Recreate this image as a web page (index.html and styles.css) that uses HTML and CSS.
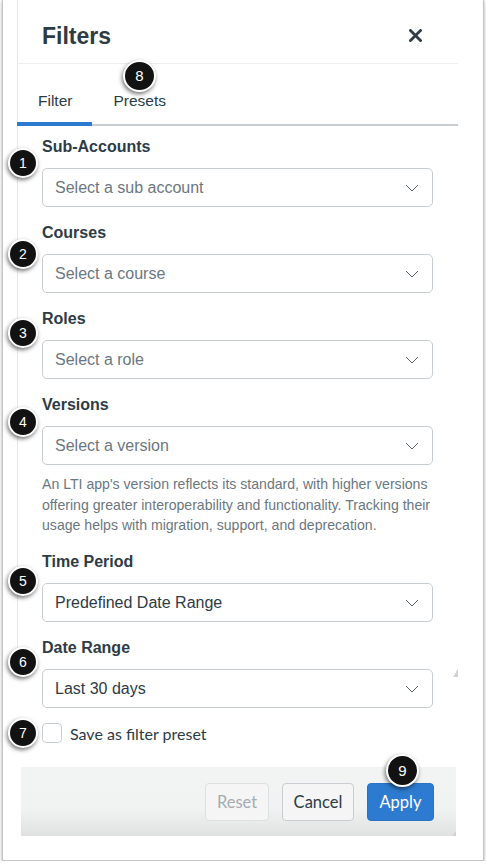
FILE: index.html
```html
<!DOCTYPE html>
<html>
<head>
<meta charset="utf-8">
<link rel="stylesheet" href="styles.css">
</head>
<body>
<div class="frame">
  <div class="panel">
    <header class="head">
      <h1 class="title">Filters</h1>
      <button class="close" aria-label="Close">
        <svg width="13" height="13" viewBox="0 0 13 13"><path d="M1.5 1.5 L11.5 11.5 M11.5 1.5 L1.5 11.5" stroke="#2d3b45" stroke-width="2.8" stroke-linecap="square" fill="none"/></svg>
      </button>
    </header>
    <nav class="tabs">
      <div class="tab active">Filter</div>
      <div class="tab">Presets</div>
    </nav>
    <div class="content">
      <div class="field">
        <div class="label">Sub-Accounts</div>
        <div class="select placeholder"><span>Select a sub account</span><svg class="chev" width="14" height="8" viewBox="0 0 14 8"><path d="M1 1 L7 7 L13 1" stroke="#56616a" stroke-width="1" fill="none"/></svg></div>
      </div>
      <div class="field">
        <div class="label">Courses</div>
        <div class="select placeholder"><span>Select a course</span><svg class="chev" width="14" height="8" viewBox="0 0 14 8"><path d="M1 1 L7 7 L13 1" stroke="#56616a" stroke-width="1" fill="none"/></svg></div>
      </div>
      <div class="field">
        <div class="label">Roles</div>
        <div class="select placeholder"><span>Select a role</span><svg class="chev" width="14" height="8" viewBox="0 0 14 8"><path d="M1 1 L7 7 L13 1" stroke="#56616a" stroke-width="1" fill="none"/></svg></div>
      </div>
      <div class="field">
        <div class="label">Versions</div>
        <div class="select placeholder"><span>Select a version</span><svg class="chev" width="14" height="8" viewBox="0 0 14 8"><path d="M1 1 L7 7 L13 1" stroke="#56616a" stroke-width="1" fill="none"/></svg></div>
        <p class="help">An LTI app's version reflects its standard, with higher versions<br>offering greater interoperability and functionality. Tracking their<br>usage helps with migration, support, and deprecation.</p>
      </div>
      <div class="field">
        <div class="label">Time Period</div>
        <div class="select"><span>Predefined Date Range</span><svg class="chev" width="14" height="8" viewBox="0 0 14 8"><path d="M1 1 L7 7 L13 1" stroke="#56616a" stroke-width="1" fill="none"/></svg></div>
      </div>
      <div class="field last">
        <div class="label">Date Range</div>
        <div class="select"><span>Last 30 days</span><svg class="chev" width="14" height="8" viewBox="0 0 14 8"><path d="M1 1 L7 7 L13 1" stroke="#56616a" stroke-width="1" fill="none"/></svg></div>
      </div>
      <label class="check"><span class="box"></span><span class="check-text">Save as filter preset</span></label>
    </div>
    <span class="grip grip-panel"></span>
  </div>
  <footer class="foot">
    <button class="btn disabled">Reset</button>
    <button class="btn cancel">Cancel</button>
    <button class="btn primary">Apply</button>
    <span class="grip grip-foot"></span>
  </footer>

  <span class="badge b8">8</span>
  <span class="badge b1">1</span>
  <span class="badge b2">2</span>
  <span class="badge b3">3</span>
  <span class="badge b4">4</span>
  <span class="badge b5">5</span>
  <span class="badge b6">6</span>
  <span class="badge b7">7</span>
  <span class="badge b9">9</span>
</div>
</body>
</html>
```

FILE: styles.css
```css
* { box-sizing: border-box; }

html, body {
  margin: 0;
  padding: 0;
  background: #ffffff;
}

body {
  font-family: "Liberation Sans", Arial, sans-serif;
  color: #2d3b45;
}

.frame {
  position: relative;
  margin-left: 2px;
  width: 482px;
  height: 861px;
  border: 1px solid #c4c4c4;
  border-top: none;
  box-shadow: 0 1px 3px rgba(0, 0, 0, 0.35);
  background: #fff;
}

.panel {
  position: relative;
  margin-left: 14px;
  width: 441px;
}

.panel::before {
  content: "";
  position: absolute;
  left: 0;
  top: 0;
  width: 1px;
  height: 677px;
  background: #e8e8e8;
}

.head {
  height: 64px;
  padding: 8px 25px 0 25px;
  display: flex;
  align-items: center;
  justify-content: space-between;
  border-bottom: 1px solid #eeeeee;
}

.title {
  margin: 0;
  font-size: 23px;
  line-height: 28px;
  font-weight: bold;
  color: #2d3b45;
}

.close {
  border: 0;
  background: none;
  padding: 0;
  margin-right: 11px;
  margin-top: -1px;
  width: 13px;
  height: 13px;
  display: flex;
}

.tabs {
  display: flex;
  border-bottom: 2px solid #c7cdd1;
}

.tab {
  position: relative;
  height: 60px;
  padding: 28px 20px 14px 21px;
  font-size: 15.5px;
  line-height: 18px;
  color: #2d3b45;
}

.tab.active::after {
  content: "";
  position: absolute;
  left: 0;
  right: 0;
  bottom: -2px;
  height: 4px;
  background: #2d7bd0;
}

.content {
  padding: 11px 25px 0 25px;
}

.field {
  margin-bottom: 16px;
}

.field.last {
  margin-bottom: 15px;
}

.label {
  font-size: 16px;
  line-height: 20px;
  font-weight: bold;
  color: #2d3b45;
  margin-bottom: 11px;
}

.select {
  height: 39px;
  border: 1px solid #c7cdd1;
  border-radius: 5px;
  display: flex;
  align-items: center;
  justify-content: space-between;
  padding: 0 13px 0 12px;
  font-size: 16px;
  color: #2d3b45;
}

.select.placeholder {
  color: #6b7780;
}

.chev {
  display: block;
  margin-top: 1px;
}

.help {
  margin: 9px 0 0 0;
  font-size: 14.1px;
  line-height: 20.5px;
  color: #6b7780;
  white-space: nowrap;
}

.field:has(.help) {
  margin-bottom: 16.5px;
}

.check {
  display: flex;
  align-items: center;
  gap: 8px;
  height: 20px;
}

.box {
  width: 20px;
  height: 20px;
  border: 1px solid #c7cdd1;
  border-radius: 4px;
  background: #fff;
}

.check-text {
  font-family: Lato, "Liberation Sans", sans-serif;
  font-size: 16px;
  color: #2d3b45;
}

.grip {
  position: absolute;
  width: 5px;
  height: 9px;
  background: linear-gradient(to top left, #cfd2d4 45%, transparent 50%);
}

.grip-panel {
  left: 436px;
  top: 668px;
}

.foot {
  position: relative;
  margin: 24px 0 0 18px;
  width: 435px;
  height: 69px;
  padding: 0 22px 0 0;
  display: flex;
  align-items: center;
  justify-content: flex-end;
  gap: 13px;
  background: linear-gradient(to bottom, #f2f3f3 0%, #f1f2f2 60%, #e0e1e1 100%);
}

.grip-foot {
  right: 0;
  bottom: 0;
  width: 4px;
  height: 5px;
}

.btn {
  height: 38px;
  padding: 0;
  border: 1px solid #c7cdd1;
  border-radius: 4px;
  background: #f5f5f5;
  font-family: Lato, "Liberation Sans", sans-serif;
  font-size: 16.5px;
  color: #2d3b45;
  margin-top: 1px;
}

.btn.disabled {
  color: #a5acb2;
  border-color: #dde0e3;
  background: #f5f5f5;
  width: 64px;
}

.btn.cancel {
  width: 72px;
}

.btn.primary {
  background: #2d7bd0;
  border-color: #2a73c2;
  color: #ffffff;
  width: 67px;
}

.badge {
  position: absolute;
  width: 30px;
  height: 30px;
  border-radius: 50%;
  background: #121212;
  border: 2px solid #ffffff;
  box-shadow: -1px 2px 4px rgba(0, 0, 0, 0.55);
  color: #ffffff;
  font-size: 14px;
  line-height: 26px;
  text-align: center;
  font-family: "Liberation Sans", Arial, sans-serif;
}

.b1 { left: 5px; top: 148px; }
.b2 { left: 5px; top: 239px; }
.b3 { left: 5px; top: 318px; }
.b4 { left: 5px; top: 407px; }
.b5 { left: 5px; top: 566px; }
.b6 { left: 5px; top: 647px; }
.b7 { left: 5px; top: 718px; }
.b8 { left: 120px; top: 60px; width: 33px; height: 32px; line-height: 28px; font-size: 15px; }
.b9 { left: 383px; top: 754px; width: 33px; height: 33px; line-height: 29px; font-size: 15px; }
```
